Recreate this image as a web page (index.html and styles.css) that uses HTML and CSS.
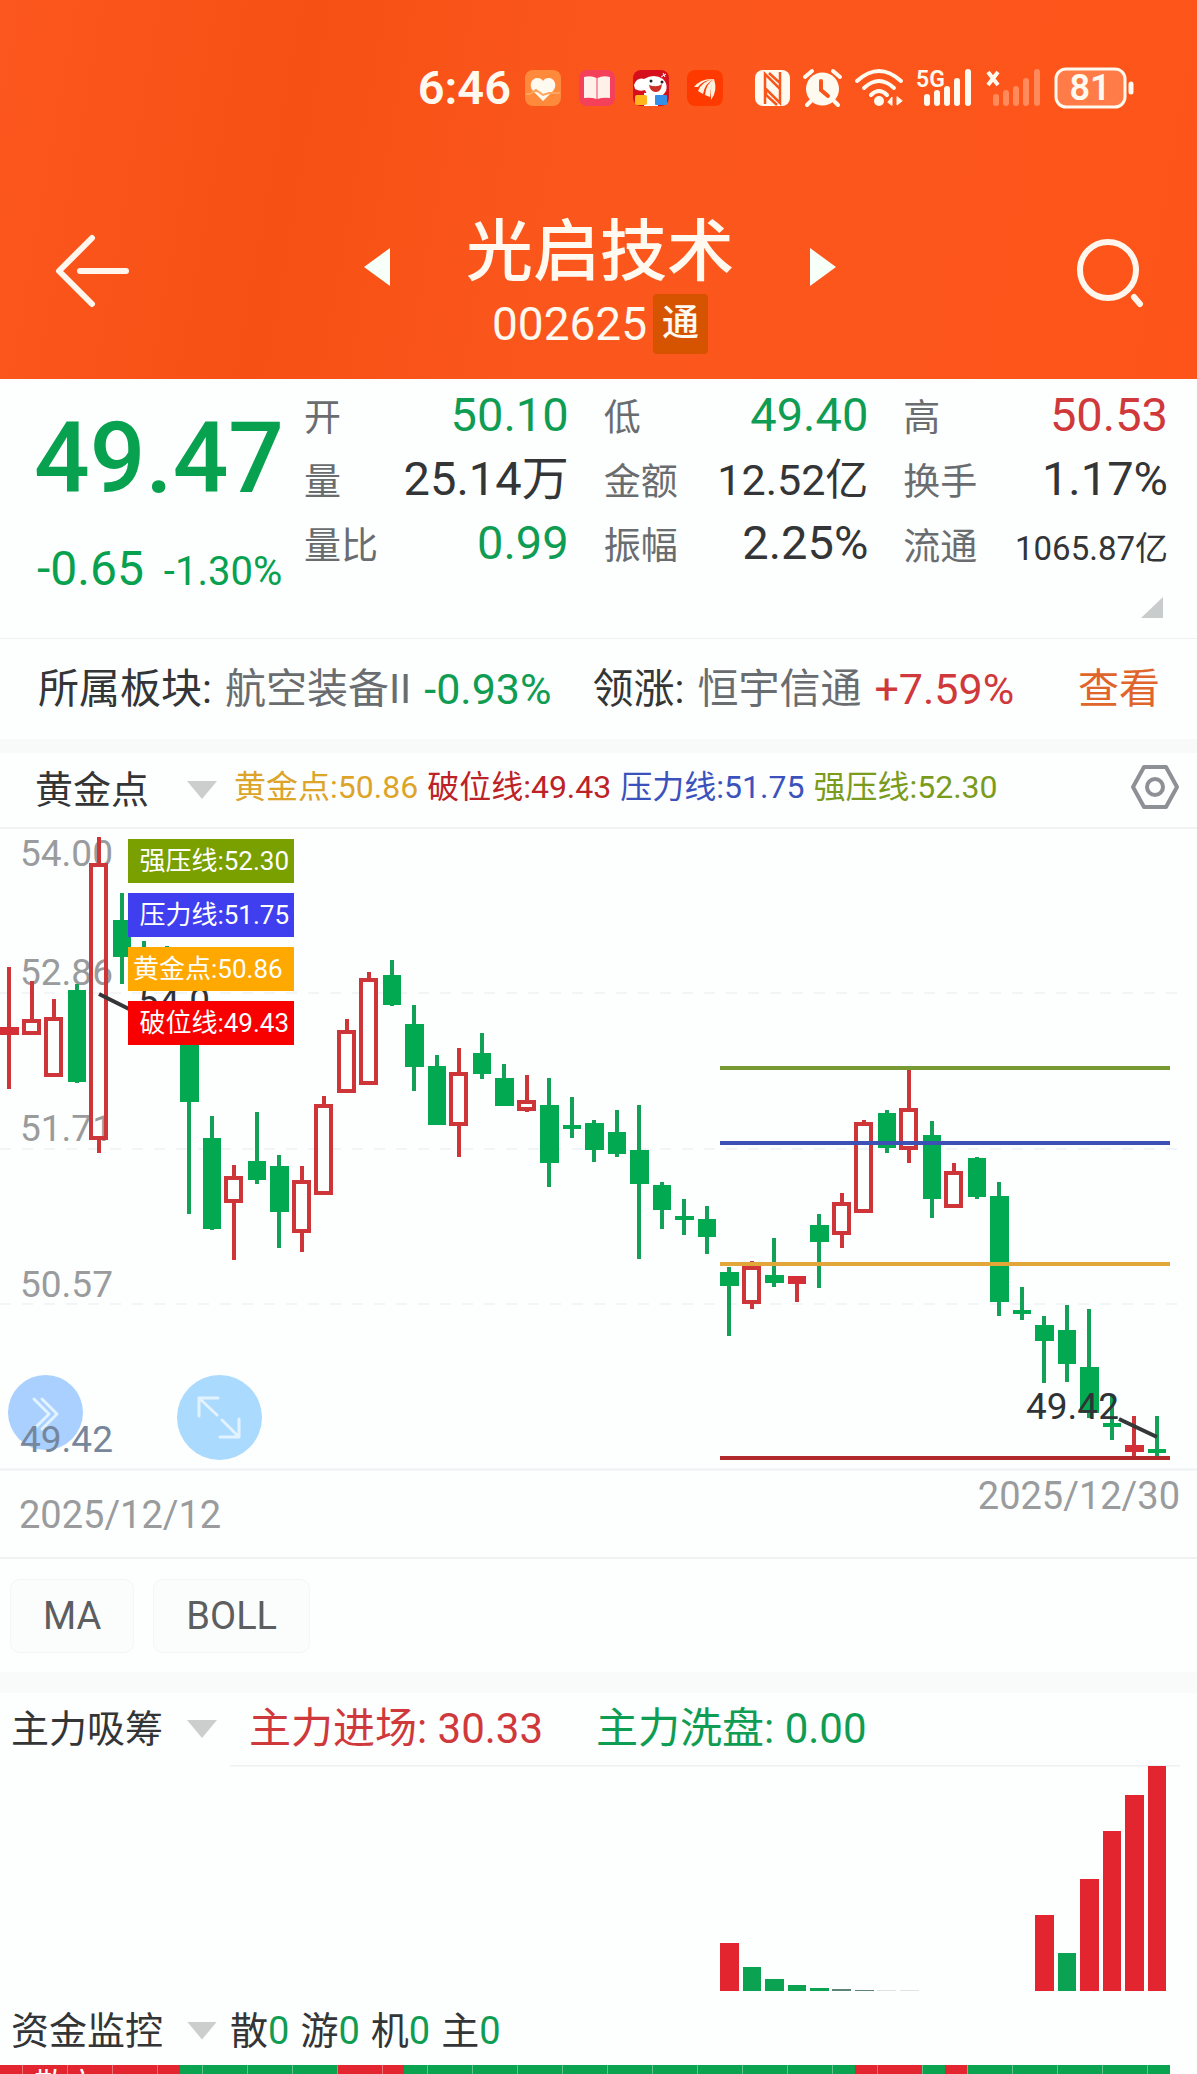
FILE: index.html
```html
<!DOCTYPE html>
<html lang="zh-CN">
<head>
<meta charset="utf-8">
<meta name="viewport" content="width=device-width, initial-scale=1">
<title>光启技术 002625</title>
<link rel="stylesheet" href="styles.css">
</head>
<body>
<header class="top">
  <div class="status">
    <span class="clock">6:46</span>
    <div class="apps">
      <svg width="36" height="36" viewBox="0 0 36 36"><rect width="36" height="36" rx="8" fill="#ff8a3c"/><path d="M18 31 8 21C3 15 7 8 12 8c3 0 5 1 6 3 1-2 3-3 6-3 5 0 9 7 4 13z" fill="#fffaf0"/><path d="M1 24h4l6-4 7 5 6-2h11" fill="none" stroke="#ffa45c" stroke-width="2"/></svg>
      <svg width="36" height="36" viewBox="0 0 36 36"><rect width="36" height="36" rx="8" fill="#f4405a"/><path d="M5 7q7-2 12.500 1v21Q12 27 5 28zM31 7q-7-2-12.500 1v21Q24 27 31 28z" fill="#fff0ea"/></svg>
      <svg width="36" height="36" viewBox="0 0 36 36"><rect width="36" height="36" rx="8" fill="#d5101c"/><path d="M1 15Q4 7 11 9q10-6 19 0 5 5 3 12-4 7-11 6-8 0-10-7-5 2-10-1z" fill="#fff"/><path d="M16 15q8 3 13-1-1 9-7 8-5-1-6-7z" fill="#c83028"/><circle cx="18" cy="11" r="1.500" fill="#222"/><circle cx="29" cy="12" r="1.500" fill="#222"/><path d="M11 23h14v13H11z" fill="#fff"/><rect x="2" y="25" width="12" height="10" rx="2" fill="#ffb51c"/><rect x="22" y="25" width="12" height="10" rx="1" fill="#338fe8"/><path d="m28 7 5-3M30 3l2 4" stroke="#fff"/></svg>
      <svg width="36" height="36" viewBox="0 0 36 36"><rect width="36" height="36" rx="8" fill="#ff3a00"/><path d="M7 17q7-9 20-8-11 1-16 8zM11 21q4-10 16-12-9 4-11 15zM18 25q1-11 9-16-3 5-4 18zM24 30q-1-14 3-21 4 12-3 21z" fill="#fff1df"/></svg>
    </div>
    <div class="signals">
      <svg width="35" height="36" viewBox="0 0 35 36"><rect width="35" height="36" rx="8" fill="#fffaf0"/><path d="M10 34V4l15 15v-6L14 3M25 2v31L11 19v6l11 10" fill="none" stroke="#f9551a" stroke-width="2.500"/></svg>
      <svg width="39" height="38" viewBox="0 0 39 38"><circle cx="19.500" cy="20" r="16.500" fill="#fffaf0"/><path d="m2 8 7-6M37 8l-7-6M8 32l-4 4M31 32l4 4" stroke="#fffaf0" stroke-width="4" stroke-linecap="round"/><path d="M18 12v9l7 6" fill="none" stroke="#f9551a" stroke-width="4" stroke-linecap="round"/></svg>
      <svg width="48" height="38" viewBox="0 0 48 38" fill="none" stroke="#fffaf0" stroke-width="4" stroke-linecap="round"><path d="M2 12q22-20 44 0M9 19q15-14 30 0M16 26q8-8 16 0"/><circle cx="24" cy="32" r="5" fill="#fffaf0" stroke="none"/><path d="m33 33 4-5v8zM42 28v8l5-4z" fill="#fffaf0" stroke-width="1"/></svg>
      <svg width="56" height="38" viewBox="0 0 56 38"><text x="0" y="18" class="net">5G</text><path d="M11 34v-6M21 34V24M31 34V20M41 34V12M52 34V3" stroke="#fffaf0" stroke-width="6" stroke-linecap="round"/></svg>
      <svg width="56" height="38" viewBox="0 0 56 38"><path d="m3 3 10 13M13 3 3 16" stroke="#fffaf0" stroke-width="4"/><path d="M11 34v-6M21 34V24M31 34V20M41 34V12M52 34V3" stroke="#ff8a5c" stroke-width="6" stroke-linecap="round"/></svg>
      <svg width="80" height="42" viewBox="0 0 80 42"><rect x="2" y="2" width="69" height="38" rx="10" fill="#ff7b48" stroke="#fffaf0" stroke-width="3"/><path d="M77 17v8" stroke="#fffaf0" stroke-width="5" stroke-linecap="round"/><text x="36" y="33" text-anchor="middle" class="charge">81</text></svg>
    </div>
  </div>
  <nav class="nav">
    <button class="plain tall" aria-label="返回"><svg width="76" height="74" viewBox="0 0 76 74" fill="none" stroke="#fff6ee" stroke-width="6" stroke-linecap="round" stroke-linejoin="round"><path d="M37 4 4 37l33 33M25 37h46"/></svg></button>
    <div class="switcher">
      <button class="plain tall" aria-label="上一只"><svg width="26" height="38" viewBox="0 0 26 38"><path d="M26 0v38L0 19z" fill="#f6fff8"/></svg></button>
      <div class="stock">
        <h1 class="name">光启技术</h1>
        <div class="code">002625<span class="tag">通</span></div>
      </div>
      <button class="plain tall" aria-label="下一只"><svg width="26" height="38" viewBox="0 0 26 38"><path d="M0 0v38l26-19z" fill="#f6fff8"/></svg></button>
    </div>
    <button class="plain tall" aria-label="搜索"><svg width="76" height="74" viewBox="0 0 76 74" fill="none" stroke="#fff6ee" stroke-width="6" stroke-linecap="round"><circle cx="39" cy="36" r="28"/><path d="m65 63 6 7"/></svg></button>
  </nav>
</header>

<main>
  <section class="quote">
    <div class="last">
      <div class="price">49.47</div>
      <div class="change"><span class="diff">-0.65</span><span class="pct">-1.30%</span></div>
    </div>
    <div class="detail">
      <dl class="stats">
        <div class="stat"><dt>开</dt><dd class="down">50.10</dd></div>
        <div class="stat"><dt>低</dt><dd class="down">49.40</dd></div>
        <div class="stat"><dt>高</dt><dd class="up">50.53</dd></div>
        <div class="stat"><dt>量</dt><dd>25.14万</dd></div>
        <div class="stat"><dt>金额</dt><dd class="medium">12.52亿</dd></div>
        <div class="stat"><dt>换手</dt><dd>1.17%</dd></div>
        <div class="stat"><dt>量比</dt><dd class="down">0.99</dd></div>
        <div class="stat"><dt>振幅</dt><dd>2.25%</dd></div>
        <div class="stat"><dt>流通</dt><dd class="small">1065.87亿</dd></div>
      </dl>
      <button class="plain expand" aria-label="展开"></button>
    </div>
  </section>

  <section class="sector">
    <span>所属板块:</span><span class="soft">航空装备II</span><span class="rate down">-0.93%</span>
    <span class="lead">领涨:</span><span class="soft">恒宇信通</span><span class="rate up">+7.59%</span>
    <a class="look" href="#">查看</a>
  </section>

  <section class="golden">
    <div class="picker indent"><select aria-label="主图指标"><option>黄金点</option></select></div>
    <div class="levels"><span class="gold">黄金点:50.86</span><span class="broke">破位线:49.43</span><span class="press">压力线:51.75</span><span class="strong">强压线:52.30</span></div>
    <button class="plain gear" aria-label="设置"><svg width="50" height="46" viewBox="0 0 50 46" fill="none" stroke="#8d9095" stroke-width="4" stroke-linejoin="round"><path d="M14 3h22l11 20-11 20H14L3 23z"/><circle cx="25" cy="23" r="8"/></svg></button>
  </section>

  <section class="chart">
    <svg class="plot" viewBox="0 829 1197 728" role="img" aria-label="K线图">
      <path class="rule" d="M0 1469.500h1197"/>
      <path class="dash" d="M0 993h1180M0 1149h1180M0 1304h1180"/>
      <g class="axis">
        <text x="20" y="866">54.00</text><text x="20" y="985">52.86</text><text x="20" y="1141">51.71</text><text x="20" y="1297">50.57</text>
        <text class="date" x="19" y="1528">2025/12/12</text><text class="date" x="1180" y="1509" text-anchor="end">2025/12/30</text>
      </g>
      <path class="wick-up" d="M9 967v122M32 981v38M54 999v18M99 837v26M99 1140v13M234 1165v11M234 1203v57M302 1166v14M302 1233v19M324 1096v8M347 1019v11M369 972v6M459 1048v24M459 1126v31M527 1075v25M527 1111v1M752 1261v5M752 1304v5M797 1276v26M842 1193v9M842 1235v13M864 1120v2M909 1069v39M909 1150v13M954 1163v8M1134 1416v42"/>
      <path class="body-up" d="M24 1021h15v12H24zM46 1019h15v56H46zM91 865h15v273H91zM226 1178h15v23H226zM294 1182h15v49H294zM316 1106h15v87H316zM339 1032h15v59H339zM361 980h15v103H361zM451 1074h15v50H451zM519 1102h15v7H519zM744 1268h15v34H744zM834 1204h15v29H834zM856 1124h15v87H856zM901 1110h15v38H901zM946 1173h15v33H946z"/>
      <path class="fill-up" d="M0 1027h19v8H0zM788 1276h18v8H788zM1125 1445h19v7H1125z"/>
      <path class="wick-down" d="M77 984v99M122 893v91M144 941v20M167 946v20M189 1040v174M212 1116v114M257 1112v72M279 1155v93M392 960v46M414 1005v86M437 1055v70M482 1033v46M504 1064v42M549 1078v109M572 1097v41M594 1120v42M617 1110v47M639 1105v154M662 1182v47M684 1199v36M707 1206v48M729 1267v69M774 1238v49M819 1214v74M887 1110v43M932 1121v97M977 1157v42M999 1182v134M1022 1287v33M1044 1316v67M1067 1305v77M1089 1309v109M1112 1395v45M1157 1416v41"/>
      <path class="fill-down" d="M68 990h18v92H68zM113 920h18v37H113zM180 1030h19v72H180zM203 1138h18v91H203zM248 1161h18v19H248zM270 1166h19v46H270zM383 975h18v30H383zM405 1024h19v43H405zM428 1066h18v59H428zM473 1053h18v21H473zM495 1078h19v28H495zM540 1105h19v58H540zM563 1125h18v4H563zM585 1123h19v27H585zM608 1132h18v22H608zM630 1150h19v34H630zM653 1185h18v25H653zM675 1216h19v4H675zM698 1219h18v18H698zM720 1272h19v14H720zM765 1275h19v8H765zM810 1225h19v17H810zM878 1113h18v35H878zM923 1135h18v64H923zM968 1158h18v39H968zM990 1196h19v106H990zM1013 1310h18v4H1013zM1035 1325h19v16H1035zM1058 1330h18v34H1058zM1080 1367h19v46H1080zM1103 1423h18v4H1103zM1148 1449h18v4H1148z"/>
      <g class="level">
        <path stroke="#779a32" d="M720 1068h450"/><path stroke="#3d50b4" d="M720 1143h450"/><path stroke="#e2a738" d="M720 1264h450"/><path stroke="#b02a2c" d="M720 1458h450"/>
      </g>
      <path class="pointer" d="m99 994 40 20M1119 1419l38 18"/>
      <g class="mark"><text x="138" y="1014">54.0</text><text x="1026" y="1419">49.42</text></g>
    </svg>
    <ul class="badges">
      <li class="b-strong">强压线:52.30</li><li class="b-press">压力线:51.75</li><li class="b-gold">黄金点:50.86</li><li class="b-broke">破位线:49.43</li>
    </ul>
    <button class="round next" aria-label="更多"><svg width="75" height="75" viewBox="0 0 75 75"><path d="m26 24 15 15-15 15M34 24l15 15-15 15"/></svg></button>
    <button class="round full" aria-label="全屏"><svg width="85" height="85" viewBox="0 0 85 85"><path d="M22 41V23h19M22 23l18 17M62 44v18H43M62 62 45 45"/></svg></button>
    <span class="floor">49.42</span>
  </section>

  <section class="lines"><button>MA</button><button>BOLL</button></section>

  <section class="sub">
    <div class="picker"><select aria-label="副图指标"><option>主力吸筹</option></select></div>
    <div class="force"><span class="up">主力进场: 30.33</span><span class="down">主力洗盘: 0.00</span></div>
  </section>
  <svg class="plot" viewBox="0 1765 1197 231" role="img" aria-label="主力吸筹柱状图">
    <path class="rule" d="M230 1765.500h950"/>
    <path fill="#e32530" d="M720 1943h19v48h-19zM1035 1915h19v76h-19zM1080 1879h19v112h-19zM1103 1831h18v160h-18zM1125 1795h19v196h-19zM1148 1766h18v225h-18z"/>
    <path fill="#0ba351" d="M743 1967h18v24h-18zM765 1979h19v12h-19zM788 1985h18v6h-18zM810 1988h19v3h-19zM1058 1953h18v38h-18z"/>
    <path fill="#5b8577" d="M832 1989h19v2h-19zM855 1990h19v1h-19z"/><path fill="#dde4e2" d="M877 1990h19v1h-19zM900 1990h19v1h-19z"/>
  </svg>

  <section class="fund">
    <div class="picker"><select aria-label="资金指标"><option>资金监控</option></select></div>
    <div class="holders"><span>散<b>0</b></span><span>游<b>0</b></span><span>机<b>0</b></span><span>主<b>0</b></span></div>
  </section>
  <svg class="plot" viewBox="0 0 1197 9" role="img" aria-label="资金监控图">
    <path fill="#0aa350" d="M180 0h990v9H180z"/>
    <path fill="#e2252f" d="M0 0h180v9H0zM337 0h67v9h-67zM855 0h67v9h-67zM945 0h22v9h-22z"/>
    <path d="M22 4.500h1148" stroke="#fff" stroke-opacity=".35" stroke-width="9" stroke-dasharray="1 44"/>
    <text class="row-name" x="34" y="31">散户</text>
  </svg>
</main>
</body>
</html>
```
FILE: styles.css
```css
* { box-sizing: border-box; }

body {
  margin: 0;
  background: #fdfefe;
  color: #333536;
  font-family: Roboto, "Noto Sans CJK SC", sans-serif;
  font-size: 38px;
}

button, select { font: inherit; color: inherit; }
.plain { padding: 0; border: 0; background: none; display: flex; align-items: center; }
svg { display: block; }
.up { color: #d0393b; }
.down { color: #0f9c53; }

/* Header */
.top { padding: 60px 52px 25px 55px; background: linear-gradient(100deg, #fc571e, #f75014 25%, #fb571d 50%, #fe5419); color: #fff9f0; }
.status { display: flex; align-items: center; justify-content: flex-end; height: 56px; padding-right: 11px; }
.status svg { overflow: visible; }
.clock { font-size: 47px; font-weight: 600; line-height: 56px; margin-right: 14px; }
.apps { display: flex; gap: 18px; margin-right: 32px; }
.signals { display: flex; align-items: center; gap: 13px; }
.net { font-size: 23px; font-weight: 600; fill: #fffaf0; }
.charge { font-size: 36px; font-weight: 600; fill: #fffaf0; }
.nav { display: flex; justify-content: space-between; padding-top: 99px; }
.switcher { display: flex; gap: 76px; }
.tall { height: 112px; }
.switcher .tall { height: 104px; }
.name { margin: 0 0 4px; font-size: 67px; font-weight: 500; line-height: 75px; }
.code { display: flex; align-items: center; justify-content: center; gap: 6px; height: 60px; font-size: 46px; line-height: 60px; }
.tag { padding: 0 9px; border-radius: 4px; background: #d65400; font-size: 37px; font-weight: 500; }

/* Quote */
.quote { display: flex; padding: 4px 29px 20px 34px; border-bottom: 1px solid #eff1f1; }
.last { flex: 0 0 270px; padding-top: 26px; color: #07a14f; white-space: nowrap; }
.price { font-size: 98px; font-weight: 500; line-height: 100px; }
.change { display: flex; align-items: baseline; gap: 20px; margin-top: 35px; line-height: 50px; padding-left: 3px; }
.diff { font-size: 48px; }
.pct { font-size: 40px; }
.detail { flex: 1; display: flex; flex-direction: column; }
.stats { display: grid; grid-template-columns: repeat(3, 1fr); grid-auto-rows: 64px; column-gap: 35px; margin: 0; }
.stat { display: flex; justify-content: space-between; align-items: baseline; white-space: nowrap; }
.stat dt { font-size: 37px; line-height: 50px; color: #6a6d70; }
.stat dd { margin: 0; font-size: 47px; line-height: 64px; }
.stat .medium { font-size: 43px; line-height: 67px; }
.stat .small { font-size: 33px; line-height: 76px; }
.expand { align-self: flex-end; width: 22px; height: 21px; margin: 22px 5px 0 0; background: #c9cccd; clip-path: polygon(100% 0, 100% 100%, 0 100%); }

/* Sector */
.sector { display: flex; align-items: center; gap: 13px; padding: 0 37px 0 38px; height: 114px; border-bottom: 14px solid #f8f9f9; font-size: 41px; line-height: 60px; white-space: nowrap; }
.soft { color: #6a6d70; }
.rate { font-size: 43px; }
.lead { margin-left: 28px; }
.look { margin-left: auto; color: #e0652c; text-decoration: none; }

/* Indicator pickers */
.picker { position: relative; flex: none; width: 230px; padding-left: 11px; }
.picker::after { content: ""; position: absolute; left: 187px; top: 50%; width: 30px; height: 18px; margin-top: -9px; background: #cccece; clip-path: polygon(0 0, 100% 0, 50% 100%); pointer-events: none; }
.picker select { display: block; width: 100%; padding: 0; border: 0; background: none; appearance: none; line-height: 50px; }
.indent { padding-left: 35px; }

.golden { display: flex; align-items: center; height: 76px; padding-right: 17px; border-bottom: 2px solid #f0f2f4; }
.levels { display: flex; flex: 1; gap: 9px; padding-left: 4px; font-size: 32px; line-height: 68px; white-space: nowrap; align-self: flex-start; }
.gear { align-self: flex-start; height: 68px; }
.gold { color: #dca429; }
.broke { color: #bc2226; }
.press { color: #3b52bd; }
.strong { color: #7a9b1c; }

/* Candles */
.plot { width: 100%; height: auto; }
.chart { position: relative; border-bottom: 2px solid #f0f2f2; }
.rule { stroke: #eef1f2; stroke-width: 2; }
.dash { stroke: #f2f5f5; stroke-width: 2; stroke-dasharray: 11 11; }
.axis { font-size: 37px; fill: #999b9d; }
.date { font-size: 38px; }
.wick-up, .body-up { fill: none; stroke: #cd3539; stroke-width: 4; }
.fill-up { fill: #d42f36; }
.wick-down { fill: none; stroke: #14a057; stroke-width: 4; }
.fill-down { fill: #03a950; }
.level { stroke-width: 4; }
.pointer { stroke: #343638; stroke-width: 4; }
.mark { font-size: 37px; fill: #303335; }
.badges { position: absolute; left: 128px; top: 10px; display: grid; gap: 10px; margin: 0; padding: 0; list-style: none; color: #fff; font-size: 26px; line-height: 44px; }
.badges li { width: 166px; padding-right: 5px; text-align: right; white-space: nowrap; }
.badges .b-gold { padding: 0 5px; text-align: left; background: #ffa800; }
.b-strong { background: #7aa000; }
.b-press { background: #3f3ff0; }
.b-broke { background: #f80000; }
.round { position: absolute; padding: 0; border: 0; border-radius: 50%; }
.round path { fill: none; stroke: #e2f3ff; stroke-width: 3; stroke-linecap: round; stroke-linejoin: round; }
.next { left: 8px; bottom: 107px; background: #a9d0ff; }
.full { left: 177px; bottom: 97px; background: #aadafe; }
.floor { position: absolute; left: 20px; bottom: 95px; font-size: 37px; line-height: 44px; color: #76879b; }

/* Overlays */
.lines { display: flex; gap: 19px; padding: 20px 10px 19px; border-bottom: 21px solid #f9fbfb; }
.lines button { height: 74px; padding: 0 32px; border: 1px solid #f4f6f6; border-radius: 10px; background: #fbfdfc; color: #5c5e60; }

.sub { display: flex; align-items: center; height: 72px; }
.force { display: flex; gap: 53px; padding-left: 19px; font-size: 42px; line-height: 50px; white-space: nowrap; }
.fund { display: flex; align-items: center; height: 69px; }
.holders { display: flex; gap: 11px; line-height: 50px; }
.holders b { color: #0f9c53; font-weight: 400; }
.row-name { font-size: 32px; fill: #fff; }
```
